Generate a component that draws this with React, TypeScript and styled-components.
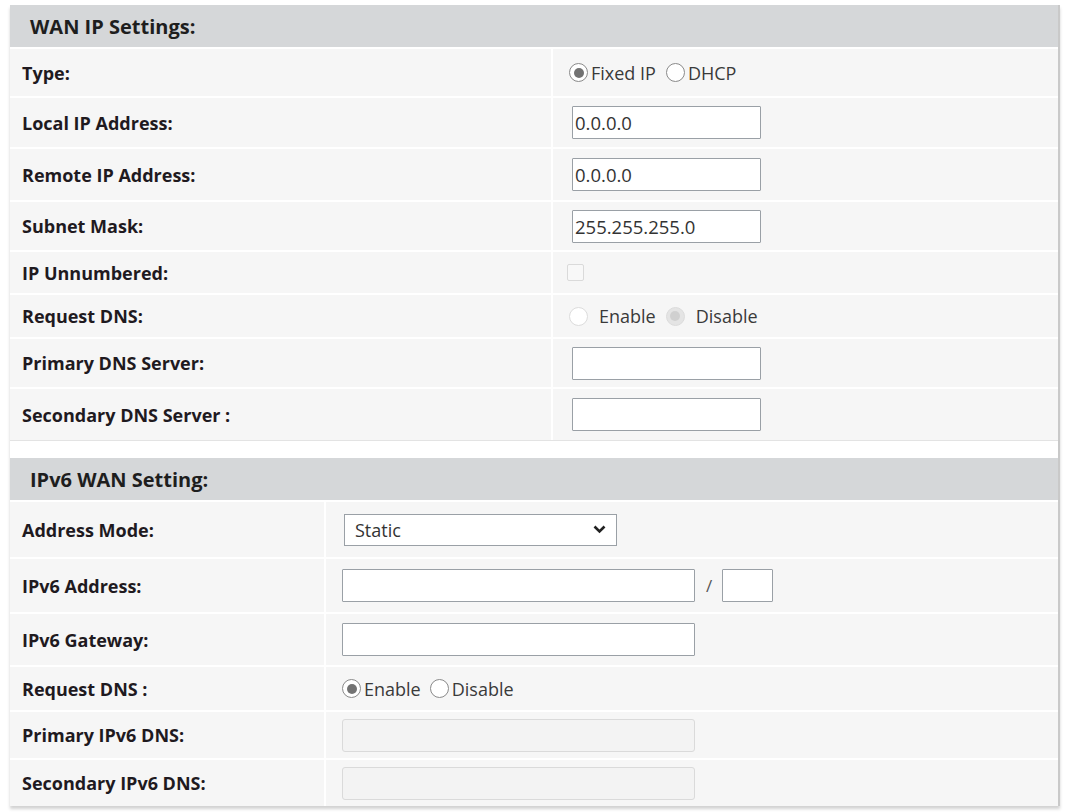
import React from 'react';
import styled, { createGlobalStyle } from 'styled-components';

const GlobalStyle = createGlobalStyle`
  html, body {
    margin: 0;
    padding: 0;
    background: #ffffff;
  }
  body {
    font-family: 'Open Sans', 'Noto Sans', sans-serif;
    color: #222;
  }
`;

type TRow = {
  label: string;
  height: number;
  value: React.ReactNode;
};

const Page = styled.div`
  padding: 5px 5px 6px 10px;
  width: 1050px;
`;

const Panel = styled.div`
  background: #ffffff;
  border-right: 2px solid #c9c9c9;
  box-shadow: 0 3px 3px rgba(0, 0, 0, 0.18);
`;

const Section = styled.div<{ $gap?: number }>`
  display: flex;
  flex-direction: column;
  margin-bottom: ${(p) => p.$gap ?? 0}px;
  border-bottom: ${(p) => (p.$gap ? '1px solid #e3e3e3' : 'none')};
`;

const Header = styled.div`
  height: 42px;
  display: flex;
  align-items: center;
  padding-left: 20px;
  background: #d5d7d9;
  font-weight: 700;
  font-size: 20px;
  color: #1e1e1e;
`;

const Row = styled.div<{ $labelWidth: number; $height: number }>`
  box-sizing: border-box;
  display: grid;
  grid-template-columns: ${(p) => p.$labelWidth}px 1fr;
  height: ${(p) => p.$height}px;
  background: #ffffff;
  column-gap: 2px;
  border-top: 2px solid #ffffff;
`;

const LabelCell = styled.div`
  background: #f6f6f6;
  display: flex;
  align-items: center;
  padding-left: 12px;
  font-weight: 700;
  font-size: 18px;
  color: #1f1a1f;
`;

const ValueCell = styled.div<{ $indent: number }>`
  background: #f6f6f6;
  display: flex;
  align-items: center;
  padding-left: ${(p) => p.$indent}px;
  font-size: 18px;
  color: #333;
`;

const TextInput = styled.input<{ $w: number; $disabledLook?: boolean }>`
  box-sizing: border-box;
  width: ${(p) => p.$w}px;
  height: 33px;
  border: 1px solid ${(p) => (p.$disabledLook ? '#dadada' : '#9aa0a6')};
  border-radius: ${(p) => (p.$disabledLook ? '3px' : '1px')};
  background: ${(p) => (p.$disabledLook ? '#f3f3f3' : '#ffffff')};
  font-family: 'Open Sans', sans-serif;
  font-size: 18.5px;
  color: #333;
  padding: 0 2px;
  outline: none;
`;

const RadioGroup = styled.div`
  display: flex;
  align-items: center;
`;

const RadioItem = styled.label<{ $spacing: number; $after: number }>`
  display: flex;
  align-items: center;
  gap: ${(p) => p.$spacing}px;
  margin-right: ${(p) => p.$after}px;
  font-size: 18px;
  color: #3a3a3a;
`;

const RadioDot = styled.span<{ $checked: boolean; $dim: boolean }>`
  box-sizing: border-box;
  width: 19px;
  height: 19px;
  border-radius: 50%;
  border: 1px solid ${(p) => (p.$dim ? '#dcdcdc' : '#8a8a8a')};
  background: ${(p) => (p.$dim && p.$checked ? '#e4e4e4' : '#fff')};
  display: inline-flex;
  align-items: center;
  justify-content: center;

  &::after {
    content: '';
    width: 10px;
    height: 10px;
    border-radius: 50%;
    background: ${(p) => (p.$checked ? (p.$dim ? '#d0d0d0' : '#727272') : 'transparent')};
  }
`;

const CheckBox = styled.span`
  box-sizing: border-box;
  width: 17px;
  height: 17px;
  border: 1px solid #dadada;
  border-radius: 2px;
  background: #f8f8f8;
  margin-left: -2px;
`;

const SelectBox = styled.div`
  box-sizing: border-box;
  width: 273px;
  height: 32px;
  margin-left: 2px;
  border: 1px solid #9aa0a6;
  background: #fff;
  display: flex;
  align-items: center;
  justify-content: space-between;
  padding: 0 10px 0 10px;
  font-size: 18px;
  color: #333;
`;

const Slash = styled.span`
  margin: 0 10px 0 11px;
  font-size: 17px;
  color: #555;
`;

const InputShift = styled.div`
  display: flex;
  margin-left: 3px;
`;

type TRadio = { text: string; checked: boolean };

const Radios: React.FC<{ items: TRadio[]; dim?: boolean; spacing?: number; after?: number }> = ({
  items,
  dim = false,
  spacing = 3,
  after = 10,
}) => (
  <RadioGroup>
    {items.map((r) => (
      <RadioItem key={r.text} $spacing={spacing} $after={after}>
        <RadioDot $checked={r.checked} $dim={dim} />
        {r.text}
      </RadioItem>
    ))}
  </RadioGroup>
);

const Chevron = () => (
  <svg width="13" height="9" viewBox="0 0 13 9">
    <path d="M1.5 1.5 L6.5 6.5 L11.5 1.5" fill="none" stroke="#222" strokeWidth="2.6" />
  </svg>
);

const WanInput: React.FC<{ value?: string }> = ({ value }) => (
  <InputShift>
    <TextInput $w={189} defaultValue={value} />
  </InputShift>
);

const wanRows: TRow[] = [
  { label: 'Type:', height: 49, value: <Radios items={[{ text: 'Fixed IP', checked: true }, { text: 'DHCP', checked: false }]} /> },
  { label: 'Local IP Address:', height: 51, value: <WanInput value="0.0.0.0" /> },
  { label: 'Remote IP Address:', height: 53, value: <WanInput value="0.0.0.0" /> },
  { label: 'Subnet Mask:', height: 50, value: <WanInput value="255.255.255.0" /> },
  { label: 'IP Unnumbered:', height: 43, value: <CheckBox /> },
  {
    label: 'Request DNS:',
    height: 44,
    value: (
      <Radios
        dim
        spacing={11}
        after={10}
        items={[
          { text: 'Enable', checked: false },
          { text: 'Disable', checked: true },
        ]}
      />
    ),
  },
  { label: 'Primary DNS Server:', height: 50, value: <WanInput /> },
  { label: 'Secondary DNS Server :', height: 53, value: <WanInput /> },
];

const v6Rows: TRow[] = [
  {
    label: 'Address Mode:',
    height: 57,
    value: (
      <SelectBox>
        Static
        <Chevron />
      </SelectBox>
    ),
  },
  {
    label: 'IPv6 Address:',
    height: 55,
    value: (
      <>
        <TextInput $w={353} />
        <Slash>/</Slash>
        <TextInput $w={51} />
      </>
    ),
  },
  { label: 'IPv6 Gateway:', height: 53, value: <TextInput $w={353} /> },
  {
    label: 'Request DNS :',
    height: 45,
    value: (
      <Radios
        after={9}
        items={[
          { text: 'Enable', checked: true },
          { text: 'Disable', checked: false },
        ]}
      />
    ),
  },
  { label: 'Primary IPv6 DNS:', height: 48, value: <TextInput $w={353} $disabledLook disabled /> },
  { label: 'Secondary IPv6 DNS:', height: 48, value: <TextInput $w={353} $disabledLook disabled /> },
];

const Table: React.FC<{ title: string; rows: TRow[]; labelWidth: number; indent: number; gap?: number }> = ({
  title,
  rows,
  labelWidth,
  indent,
  gap,
}) => (
  <Section $gap={gap}>
    <Header>{title}</Header>
    {rows.map((r) => (
      <Row key={r.label} $labelWidth={labelWidth} $height={r.height}>
        <LabelCell>{r.label}</LabelCell>
        <ValueCell $indent={indent}>{r.value}</ValueCell>
      </Row>
    ))}
  </Section>
);

export default function App() {
  return (
    <>
      <GlobalStyle />
      <Page>
        <Panel>
          <Table title="WAN IP Settings:" rows={wanRows} labelWidth={541} indent={16} gap={17} />
          <Table title="IPv6 WAN Setting:" rows={v6Rows} labelWidth={314} indent={16} />
        </Panel>
      </Page>
    </>
  );
}
